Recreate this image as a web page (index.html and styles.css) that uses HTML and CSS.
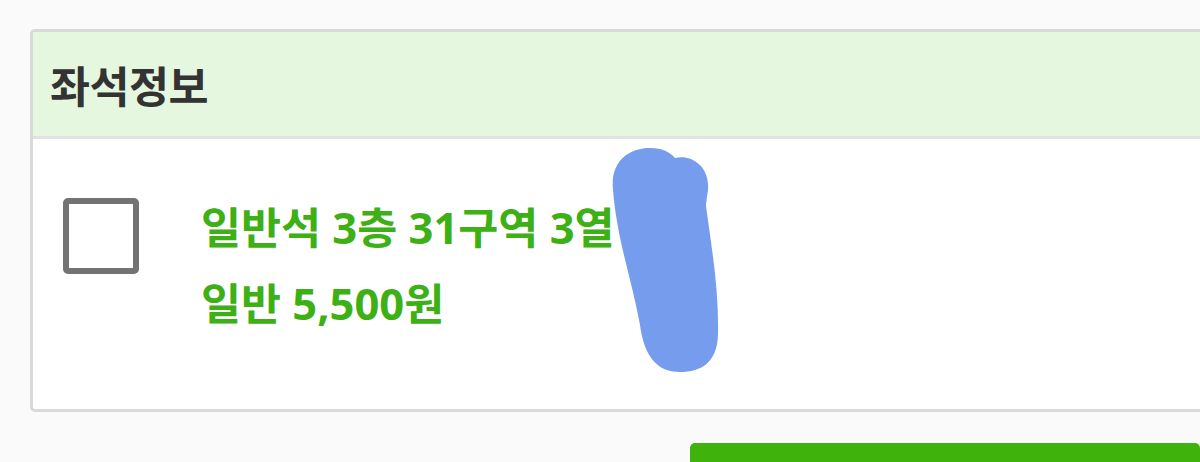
FILE: index.html
```html
<!DOCTYPE html>
<html lang="ko">
<head>
<meta charset="utf-8">
<title>좌석정보</title>
<link rel="stylesheet" href="styles.css">
</head>
<body>
<main class="page">
  <section class="seat-card">
    <header class="seat-card__head">
      <h2 class="seat-card__title">좌석정보</h2>
    </header>
    <div class="seat-card__body">
      <label class="seat-row">
        <span class="seat-check" aria-hidden="true"></span>
        <span class="seat-info">
          <span class="seat-info__line">일반석 3층 31구역 3열</span>
          <span class="seat-info__line">일반 5,500원</span>
        </span>
      </label>
    </div>
    <svg class="scribble" width="130" height="240" viewBox="0 0 130 240" aria-hidden="true">
      <path d="M13 50 C10 20 30 8 50 8 C62 8 70 12 75 18 C90 14 110 25 108 50 C107 58 106 62 106 66 C112 110 119 150 118 195 C117 222 102 232 80 232 C56 232 44 215 40 185 C32 140 17 100 13 50 Z" fill="#769ded"/>
    </svg>
  </section>
  <div class="actions">
    <button class="btn-primary" type="button" aria-label="선택완료"></button>
  </div>
</main>
</body>
</html>
```

FILE: styles.css
```css
html, body {
  margin: 0;
  padding: 0;
}

body {
  background: #fafafa;
  width: 1200px;
  height: 462px;
  overflow: hidden;
  font-family: "Open Sans", "Noto Sans CJK KR", sans-serif;
}

.page {
  padding: 29px 0 0 30px;
}

.seat-card {
  position: relative;
  width: 1220px;
  border: 3px solid #d9d9d9;
  border-radius: 5px;
  background: #fff;
  overflow: hidden;
}

.seat-card__head {
  height: 104px;
  display: flex;
  align-items: center;
  padding-left: 17px;
  background: #e6f7df;
  border-bottom: 3px solid #e2e2e2;
}

.seat-card__title {
  margin: 0;
  font-size: 43.5px;
  font-weight: 700;
  color: #333;
  letter-spacing: -0.5px;
}

.seat-card__body {
  height: 270px;
  box-sizing: border-box;
  padding: 59px 0 0 30px;
}

.seat-row {
  display: flex;
  align-items: flex-start;
  gap: 62px;
}

.seat-check {
  flex: none;
  width: 64px;
  height: 64px;
  border: 6px solid #737373;
  border-radius: 5px;
  background: #fff;
}

.seat-info {
  display: flex;
  flex-direction: column;
  gap: 16px;
  margin-top: 0;
}

.seat-info__line {
  font-size: 43.5px;
  line-height: 60px;
  font-weight: 700;
  color: #3cb014;
}

.scribble {
  position: absolute;
  left: 567px;
  top: 108px;
}

.actions {
  display: flex;
  margin-top: 31px;
  padding-left: 660px;
}

.btn-primary {
  width: 560px;
  height: 80px;
  border: 0;
  border-radius: 5px;
  background: #40b20c;
}
```
